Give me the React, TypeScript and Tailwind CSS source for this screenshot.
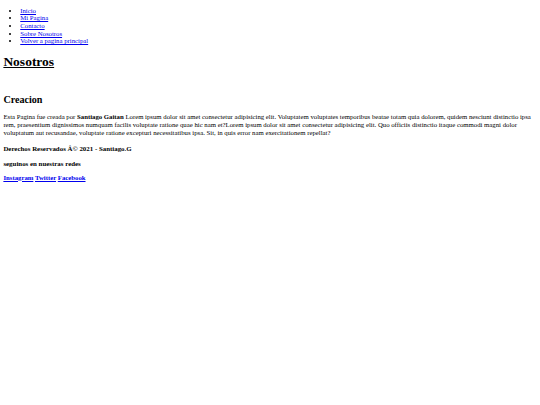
export default function App() {
  return (
    <div className="bg-white min-h-[405px] px-[3.375px] pt-[0.1px] text-black" style={{ fontFamily: '"Liberation Serif", "Times New Roman", serif' }}>
      <ul className="list-disc mt-[6.65px] mb-[6.75px] pl-[16.875px] text-[6.75px] leading-[7.6px]">
        <li><a href="#" className="text-[#0000ee] underline">Inicio</a></li>
        <li><a href="#" className="text-[#0000ee] underline">Mi Pagina</a></li>
        <li><a href="#" className="text-[#0000ee] underline">Contacto</a></li>
        <li><a href="#" className="text-[#0000ee] underline">Sobre Nosotros</a></li>
        <li><a href="#" className="text-[#0000ee] underline">Volver a pagina principal</a></li>
      </ul>
      <h1 className="text-[13.5px] font-bold underline leading-[15.5px] my-[9.05px]">Nosotros</h1>
      <h2 className="text-[10.125px] font-bold leading-[11.6px] mt-[25px] mb-[7px]">Creacion</h2>
      <p className="text-[6.75px] leading-[8px] my-[6.75px]">
        Esta Pagina fue creada por <b>Santiago Gaitan</b> Lorem ipsum dolor sit amet consectetur adipisicing elit. Voluptatem voluptates temporibus beatae totam quia dolorem, quidem nesciunt distinctio ipsa rem, praesentium dignissimos numquam facilis voluptate ratione quae hic nam et?Lorem ipsum dolor sit amet consectetur adipisicing elit. Quo officiis distinctio itaque commodi magni dolor voluptatum aut recusandae, voluptate ratione excepturi necessitatibus ipsa. Sit, in quis error nam exercitationem repellat?
      </p>
      <h5 className="text-[6.9px] font-bold leading-[7.5px] my-[8px]">Derechos Reservados Â© 2021 - Santiago.G</h5>
      <h5 className="text-[6.9px] font-bold leading-[7.5px] mt-[8px] mb-[6px]">seguinos en nuestras redes</h5>
      <p className="text-[6.75px] leading-[8px] mt-[6px] mb-[6.75px] font-bold">
        <a href="#" className="text-[#0000ee] underline">Instagram</a> <a href="#" className="text-[#0000ee] underline">Twitter</a> <a href="#" className="text-[#0000ee] underline">Facebook</a>
      </p>
    </div>
  );
}
